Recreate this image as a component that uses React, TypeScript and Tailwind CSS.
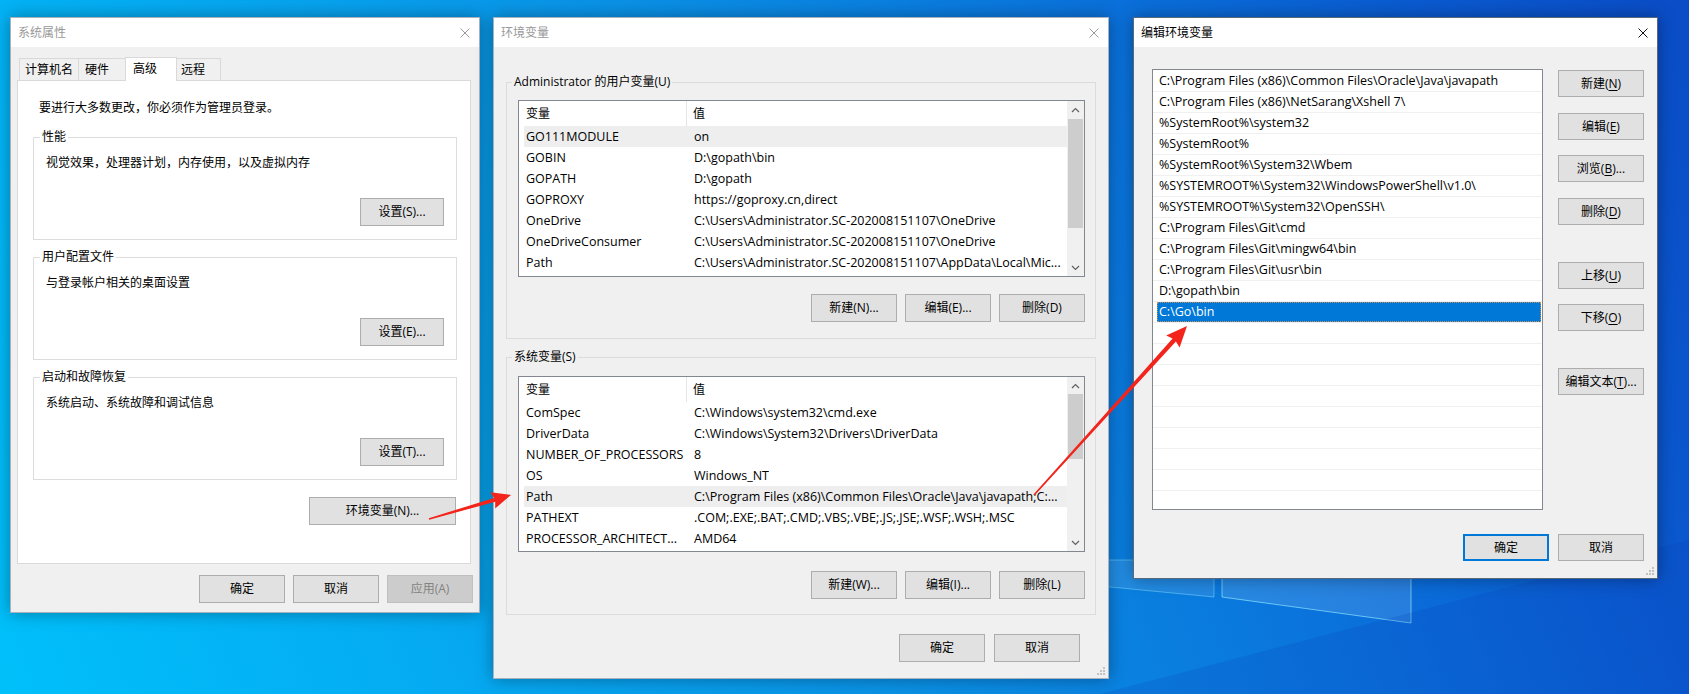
import type { ReactNode } from "react";

const userVars: [string, string][] = [
  ["GO111MODULE", "on"],
  ["GOBIN", "D:\\gopath\\bin"],
  ["GOPATH", "D:\\gopath"],
  ["GOPROXY", "https://goproxy.cn,direct"],
  ["OneDrive", "C:\\Users\\Administrator.SC-202008151107\\OneDrive"],
  ["OneDriveConsumer", "C:\\Users\\Administrator.SC-202008151107\\OneDrive"],
  ["Path", "C:\\Users\\Administrator.SC-202008151107\\AppData\\Local\\Mic..."],
];

const sysVars: [string, string][] = [
  ["ComSpec", "C:\\Windows\\system32\\cmd.exe"],
  ["DriverData", "C:\\Windows\\System32\\Drivers\\DriverData"],
  ["NUMBER_OF_PROCESSORS", "8"],
  ["OS", "Windows_NT"],
  ["Path", "C:\\Program Files (x86)\\Common Files\\Oracle\\Java\\javapath;C:..."],
  ["PATHEXT", ".COM;.EXE;.BAT;.CMD;.VBS;.VBE;.JS;.JSE;.WSF;.WSH;.MSC"],
  ["PROCESSOR_ARCHITECT...", "AMD64"],
];

const paths = [
  "C:\\Program Files (x86)\\Common Files\\Oracle\\Java\\javapath",
  "C:\\Program Files (x86)\\NetSarang\\Xshell 7\\",
  "%SystemRoot%\\system32",
  "%SystemRoot%",
  "%SystemRoot%\\System32\\Wbem",
  "%SYSTEMROOT%\\System32\\WindowsPowerShell\\v1.0\\",
  "%SYSTEMROOT%\\System32\\OpenSSH\\",
  "C:\\Program Files\\Git\\cmd",
  "C:\\Program Files\\Git\\mingw64\\bin",
  "C:\\Program Files\\Git\\usr\\bin",
  "D:\\gopath\\bin",
  "C:\\Go\\bin",
];

function CloseX({ active }: { active?: boolean }) {
  return (
    <svg width="10" height="10" viewBox="0 0 10 10" className="block">
      <path d="M0.5 0.5L9.5 9.5M9.5 0.5L0.5 9.5" stroke={active ? "#111" : "#9a9a9a"} strokeWidth="1" />
    </svg>
  );
}

function Grip() {
  return (
    <svg width="12" height="12" viewBox="0 0 12 12" className="absolute bottom-[2px] right-[2px]">
      <g fill="#c2c2c2">
        <rect x="9" y="3" width="2" height="2" />
        <rect x="6" y="6" width="2" height="2" />
        <rect x="9" y="6" width="2" height="2" />
        <rect x="3" y="9" width="2" height="2" />
        <rect x="6" y="9" width="2" height="2" />
        <rect x="9" y="9" width="2" height="2" />
      </g>
    </svg>
  );
}

function Window({
  title,
  active,
  className,
  children,
}: {
  title: string;
  active?: boolean;
  className: string;
  children: ReactNode;
}) {
  return (
    <div
      className={`absolute flex flex-col border bg-[#f0f0f0] shadow-[0_0_16px_rgba(0,0,0,0.35)] ${
        active ? "border-[#58697c]" : "border-[#a9b2bc]"
      } ${className}`}
    >
      <div className="flex h-[29px] shrink-0 items-center justify-between bg-white pl-[7px] pr-[9px]">
        <span className={`leading-[16px] ${active ? "text-black" : "text-[#999999]"}`}>{title}</span>
        <CloseX active={active} />
      </div>
      {children}
    </div>
  );
}

function Btn({
  children,
  className = "",
  disabled,
  primary,
}: {
  children: ReactNode;
  className?: string;
  disabled?: boolean;
  primary?: boolean;
}) {
  const look = disabled
    ? "border border-[#bfbfbf] bg-[#cccccc] text-[#838383]"
    : primary
      ? "border-2 border-[#0078d7] bg-[#e1e1e1] text-black"
      : "border border-[#adadad] bg-[#e1e1e1] text-black";
  return (
    <button type="button" className={`flex shrink-0 items-center justify-center leading-[16px] ${look} ${className}`}>
      {children}
    </button>
  );
}

function Chevron({ up }: { up?: boolean }) {
  return (
    <svg width="9" height="6" viewBox="0 0 9 6" className="block">
      <path d={up ? "M1 5L4.5 1.5L8 5" : "M1 1L4.5 4.5L8 1"} fill="none" stroke="#606060" strokeWidth="1.2" />
    </svg>
  );
}

function VScroll({ thumb }: { thumb: string }) {
  return (
    <div className="flex w-[17px] shrink-0 flex-col bg-[#f0f0f0]">
      <div className="flex h-[17px] items-center justify-center">
        <Chevron up />
      </div>
      <div className="flex-1">
        <div className={`mx-auto w-[15px] bg-[#cdcdcd] ${thumb}`} />
      </div>
      <div className="flex h-[17px] items-center justify-center">
        <Chevron />
      </div>
    </div>
  );
}

function VarList({ rows, hi, thumb, className }: { rows: [string, string][]; hi: number; thumb: string; className: string }) {
  return (
    <div className={`flex border border-[#828790] bg-white ${className}`}>
      <div className="min-w-0 flex-1 overflow-hidden">
        <div className="flex h-[25px]">
          <div className="w-[168px] shrink-0 border-r border-[#e5e5e5] pl-[7px] leading-[25px]">变量</div>
          <div className="pl-[6px] leading-[25px]">值</div>
        </div>
        {rows.map(([k, v], i) => (
          <div
            key={k + i}
            className={`ml-[5px] flex h-[21px] items-center whitespace-nowrap text-[12.5px] leading-[21px] ${
              i === hi ? "bg-[#eeeeee]" : ""
            }`}
          >
            <div className="w-[168px] shrink-0 overflow-hidden pl-[2px]">{k}</div>
            <div className="min-w-0 overflow-hidden pl-[2px]">{v}</div>
          </div>
        ))}
      </div>
      <VScroll thumb={thumb} />
    </div>
  );
}

function Group({
  label,
  legend,
  className,
  children,
}: {
  label: string;
  legend: string;
  className: string;
  children: ReactNode;
}) {
  return (
    <fieldset className={`border border-[#dcdcdc] ${className}`}>
      <legend className={`px-[2px] leading-[16px] ${legend}`}>{label}</legend>
      {children}
    </fieldset>
  );
}

function SettingGroup({ label, text, btn, className }: { label: string; text: string; btn: string; className: string }) {
  return (
    <Group label={label} legend="ml-[6px]" className={`ml-[15px] w-[424px] ${className}`}>
      <div className="flex flex-col px-[12px] pb-[13px]">
        <p className="mt-[10px] leading-[16px]">{text}</p>
        <Btn className="mt-[27px] h-[28px] w-[84px] self-end">{btn}</Btn>
      </div>
    </Group>
  );
}

function Tab({ children, className, active }: { children: ReactNode; className: string; active?: boolean }) {
  return (
    <div
      className={`flex shrink-0 border-x border-t border-[#d9d9d9] ${
        active ? "relative z-10 -mb-px h-[24px] items-start bg-white pt-[3px]" : "h-[22px] items-center bg-[#f0f0f0]"
      } ${className}`}
    >
      <span className="leading-[16px]">{children}</span>
    </div>
  );
}

function Acc({ pre, k, post = "" }: { pre: string; k: string; post?: string }) {
  return (
    <span>
      {pre}(<span className="underline underline-offset-2">{k}</span>){post}
    </span>
  );
}

function arrow(x1: number, y1: number, x2: number, y2: number, head: number, hw: number, s0: number, s1: number) {
  const dx = x2 - x1;
  const dy = y2 - y1;
  const len = Math.hypot(dx, dy);
  const ux = dx / len;
  const uy = dy / len;
  const px = -uy;
  const py = ux;
  const bx = x2 - ux * head;
  const by = y2 - uy * head;
  const pts = [
    [x1 + px * s0, y1 + py * s0],
    [bx + px * s1, by + py * s1],
    [bx + px * hw - ux * 2, by + py * hw - uy * 2],
    [x2, y2],
    [bx - px * hw - ux * 2, by - py * hw - uy * 2],
    [bx - px * s1, by - py * s1],
    [x1 - px * s0, y1 - py * s0],
  ];
  return pts.map((p) => p.map((n) => n.toFixed(1)).join(",")).join(" ");
}

export default function App() {
  return (
    <div className="relative h-[694px] w-[1689px] overflow-hidden bg-[linear-gradient(68deg,#00c0fa_0%,#05abf2_22%,#0a92e6_45%,#0a74dc_68%,#0a5ad0_86%,#0a4cc6_100%)] font-[Open_Sans,Noto_Sans_CJK_SC,sans-serif] text-[12px] text-black">
      {/* wallpaper panes */}
      <svg className="absolute inset-0" width="1689" height="694" viewBox="0 0 1689 694">
        <polygon points="1100,560 1214,560 1214,597 1100,586" fill="#ffffff" fillOpacity="0.1" stroke="#8ee6ff" strokeOpacity="0.45" />
        <polygon points="1222,560 1411,560 1411,623 1222,597" fill="#ffffff" fillOpacity="0.12" stroke="#8ee6ff" strokeOpacity="0.7" />
        <polygon points="1100,694 1689,540 1689,694" fill="#0a3fb8" fillOpacity="0.18" />
      </svg>

      {/* 系统属性 */}
      <Window title="系统属性" className="left-[10px] top-[17px] h-[596px] w-[470px]">
        <div className="flex flex-col pt-[10px]">
          <div className="flex h-[23px] items-end pl-[8px]">
            <Tab className="w-[60px] pl-[5px]">计算机名</Tab>
            <Tab className="-ml-px w-[48px] pl-[6px]">硬件</Tab>
            <Tab active className="-ml-px w-[52px] pl-[7px]">
              高级
            </Tab>
            <Tab className="-ml-px w-[45px] pl-[4px]">远程</Tab>
          </div>
          <div className="ml-[6px] flex h-[484px] w-[454px] flex-col border border-[#d9d9d9] bg-white">
            <p className="pl-[21px] pt-[19px] leading-[16px]">要进行大多数更改，你必须作为管理员登录。</p>
            <SettingGroup className="mt-[13px]" label="性能" text="视觉效果，处理器计划，内存使用，以及虚拟内存" btn="设置(S)..." />
            <SettingGroup className="mt-[9px]" label="用户配置文件" text="与登录帐户相关的桌面设置" btn="设置(E)..." />
            <SettingGroup className="mt-[9px]" label="启动和故障恢复" text="系统启动、系统故障和调试信息" btn="设置(T)..." />
            <Btn className="mr-[14px] mt-[17px] h-[28px] w-[147px] self-end">环境变量(N)...</Btn>
          </div>
          <div className="mt-[11px] flex justify-end gap-[8px] pr-[6px]">
            <Btn className="h-[28px] w-[86px]">确定</Btn>
            <Btn className="h-[28px] w-[86px]">取消</Btn>
            <Btn disabled className="h-[28px] w-[86px]">
              应用(A)
            </Btn>
          </div>
        </div>
      </Window>

      {/* 环境变量 */}
      <Window title="环境变量" className="left-[493px] top-[17px] h-[662px] w-[616px]">
        <div className="flex flex-col">
          <Group label="Administrator 的用户变量(U)" legend="ml-[5px]" className="ml-[12px] mt-[27px] w-[590px]">
            <div className="flex flex-col pb-[16px] pl-[11px] pr-[10px]">
              <VarList rows={userVars} hi={0} thumb="mt-[1px] h-[109px]" className="mt-[10px] h-[177px]" />
              <div className="mt-[17px] flex justify-end gap-[8px]">
                <Btn className="h-[28px] w-[86px]">新建(N)...</Btn>
                <Btn className="h-[28px] w-[86px]">编辑(E)...</Btn>
                <Btn className="h-[28px] w-[86px]">删除(D)</Btn>
              </div>
            </div>
          </Group>
          <Group label="系统变量(S)" legend="ml-[5px]" className="ml-[12px] mt-[10px] w-[590px]">
            <div className="flex flex-col pb-[15px] pl-[11px] pr-[10px]">
              <VarList rows={sysVars} hi={4} thumb="h-[65px]" className="mt-[11px] h-[176px]" />
              <div className="mt-[19px] flex justify-end gap-[8px]">
                <Btn className="h-[28px] w-[86px]">新建(W)...</Btn>
                <Btn className="h-[28px] w-[86px]">编辑(I)...</Btn>
                <Btn className="h-[28px] w-[86px]">删除(L)</Btn>
              </div>
            </div>
          </Group>
          <div className="mt-[19px] flex justify-end gap-[9px] pr-[28px]">
            <Btn className="h-[28px] w-[86px]">确定</Btn>
            <Btn className="h-[28px] w-[86px]">取消</Btn>
          </div>
        </div>
        <Grip />
      </Window>

      {/* 编辑环境变量 */}
      <Window active title="编辑环境变量" className="left-[1133px] top-[17px] h-[562px] w-[525px]">
        <div className="flex flex-col">
          <div className="flex pl-[18px] pt-[22px]">
            <div className="h-[441px] w-[391px] overflow-hidden border border-[#828790] bg-white pt-px">
              {Array.from({ length: 21 }).map((_, i) => {
                const p = paths[i];
                const sel = i === paths.length - 1;
                return (
                  <div key={i} className="flex h-[21px] border-b border-[#f0f0f0] pl-[4px] pr-px">
                    <div
                      className={`flex-1 whitespace-nowrap pl-[2px] text-[12.5px] leading-[20px] ${
                        sel ? "bg-[#0078d7] text-white outline-1 -outline-offset-1 outline-dotted outline-[#c9925a]" : ""
                      }`}
                    >
                      {p ?? ""}
                    </div>
                  </div>
                );
              })}
            </div>
            <div className="ml-[15px] flex flex-col pt-px">
              <Btn className="h-[27px] w-[86px]">
                <Acc pre="新建" k="N" />
              </Btn>
              <Btn className="mt-[16px] h-[27px] w-[86px]">
                <Acc pre="编辑" k="E" />
              </Btn>
              <Btn className="mt-[15px] h-[27px] w-[86px]">
                <Acc pre="浏览" k="B" post="..." />
              </Btn>
              <Btn className="mt-[16px] h-[27px] w-[86px]">
                <Acc pre="删除" k="D" />
              </Btn>
              <Btn className="mt-[37px] h-[27px] w-[86px]">
                <Acc pre="上移" k="U" />
              </Btn>
              <Btn className="mt-[15px] h-[27px] w-[86px]">
                <Acc pre="下移" k="O" />
              </Btn>
              <Btn className="mt-[37px] h-[27px] w-[86px]">
                <Acc pre="编辑文本" k="T" post="..." />
              </Btn>
            </div>
          </div>
          <div className="mt-[24px] flex justify-end gap-[9px] pr-[13px]">
            <Btn primary className="h-[27px] w-[86px]">
              确定
            </Btn>
            <Btn className="h-[27px] w-[86px]">取消</Btn>
          </div>
        </div>
        <Grip />
      </Window>

      {/* red arrows */}
      <svg className="pointer-events-none absolute inset-0 z-20" width="1689" height="694" viewBox="0 0 1689 694">
        <polygon points={arrow(429, 519, 511, 495, 17, 8.5, 0.8, 2)} fill="#f2241b" />
        <polygon points={arrow(1034, 495, 1187, 326, 19, 9, 0.8, 2.2)} fill="#f2241b" />
      </svg>
    </div>
  );
}
